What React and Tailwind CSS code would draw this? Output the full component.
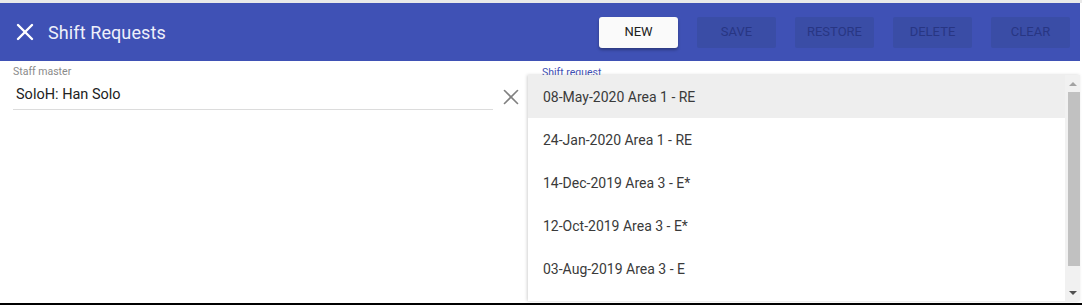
import { X } from "lucide-react";

const requests = [
  "08-May-2020 Area 1 - RE",
  "24-Jan-2020 Area 1 - RE",
  "14-Dec-2019 Area 3 - E*",
  "12-Oct-2019 Area 3 - E*",
  "03-Aug-2019 Area 3 - E",
];

const actions = ["SAVE", "RESTORE", "DELETE", "CLEAR"];

export default function App() {
  return (
    <div
      className="w-[1082px] h-[305px] flex flex-col bg-white overflow-hidden"
      style={{ fontFamily: "Roboto, 'Liberation Sans', sans-serif" }}
    >
      {/* top strip */}
      <div className="h-[3px] bg-[#e9e9e9] shrink-0" />

      {/* header bar */}
      <div className="h-[58px] shrink-0 mr-[2px] bg-[#3f51b5] flex items-center pl-[11px] pr-[10px]">
        <X className="w-[28px] h-[28px] text-white" strokeWidth={2.1} />
        <h1 className="ml-[9px] text-[18px] text-[#eef0fa] tracking-[0.1px]">Shift Requests</h1>
        <div className="ml-auto flex gap-[19px]">
          <button className="w-[79px] h-[31px] rounded-[3px] bg-[#fafafa] text-[13px] text-[#202020] shadow-[0_2px_3px_rgba(0,0,0,0.3)]">
            NEW
          </button>
          {actions.map((a) => (
            <button
              key={a}
              disabled
              className="w-[79px] h-[31px] rounded-[2px] bg-[#3a4da6] text-[13px] text-[#283683]"
            >
              {a}
            </button>
          ))}
        </div>
      </div>

      {/* body */}
      <div className="relative flex-1 flex">
        <div className="w-[480px] ml-[13px] pt-[5px]">
          <div className="text-[10.5px] text-[#8a8a8a] leading-[12px]">Staff master</div>
          <div className="flex items-center h-[32px] pt-[3px] border-b border-[#dcdcdc] pl-[3px]">
            <span className="text-[14.5px] text-[#222]">SoloH: Han Solo</span>
          </div>
        </div>
        <div className="ml-[5px] pt-[23px]">
          <X className="w-[26px] h-[26px] text-[#808080]" strokeWidth={1.5} />
        </div>
        <div className="ml-[18px] pt-[6px] text-[10.5px] leading-[12px] text-[#3f51b5]">Shift request</div>

        {/* dropdown menu */}
        <div className="absolute left-[528px] top-[14px] right-[2px] bottom-[2px] bg-white shadow-[-1px_0_3px_rgba(0,0,0,0.18)] flex">
          <ul className="flex-1">
            {requests.map((r, i) => (
              <li
                key={r}
                className={`h-[43px] flex items-center pl-[15px] pt-[1px] text-[14px] text-[#3a3a3a] ${
                  i === 0 ? "bg-[#eeeeee]" : ""
                }`}
              >
                {r}
              </li>
            ))}
          </ul>
          <div className="w-[15px] bg-[#f1f1f1] flex flex-col items-center">
            <div className="h-[17px] flex items-center justify-center">
              <div className="w-0 h-0 border-l-[4px] border-r-[4px] border-b-[4px] border-l-transparent border-r-transparent border-b-[#a3a3a3]" />
            </div>
            <div className="w-[12px] h-[174px] ml-[2px] bg-[#c1c1c1]" />
            <div className="flex-1" />
            <div className="h-[17px] flex items-center justify-center">
              <div className="w-0 h-0 border-l-[4px] border-r-[4px] border-t-[4px] border-l-transparent border-r-transparent border-t-[#505050]" />
            </div>
          </div>
        </div>
      </div>

      {/* bottom edge */}
      <div className="h-[2px] bg-black shrink-0" />
    </div>
  );
}
